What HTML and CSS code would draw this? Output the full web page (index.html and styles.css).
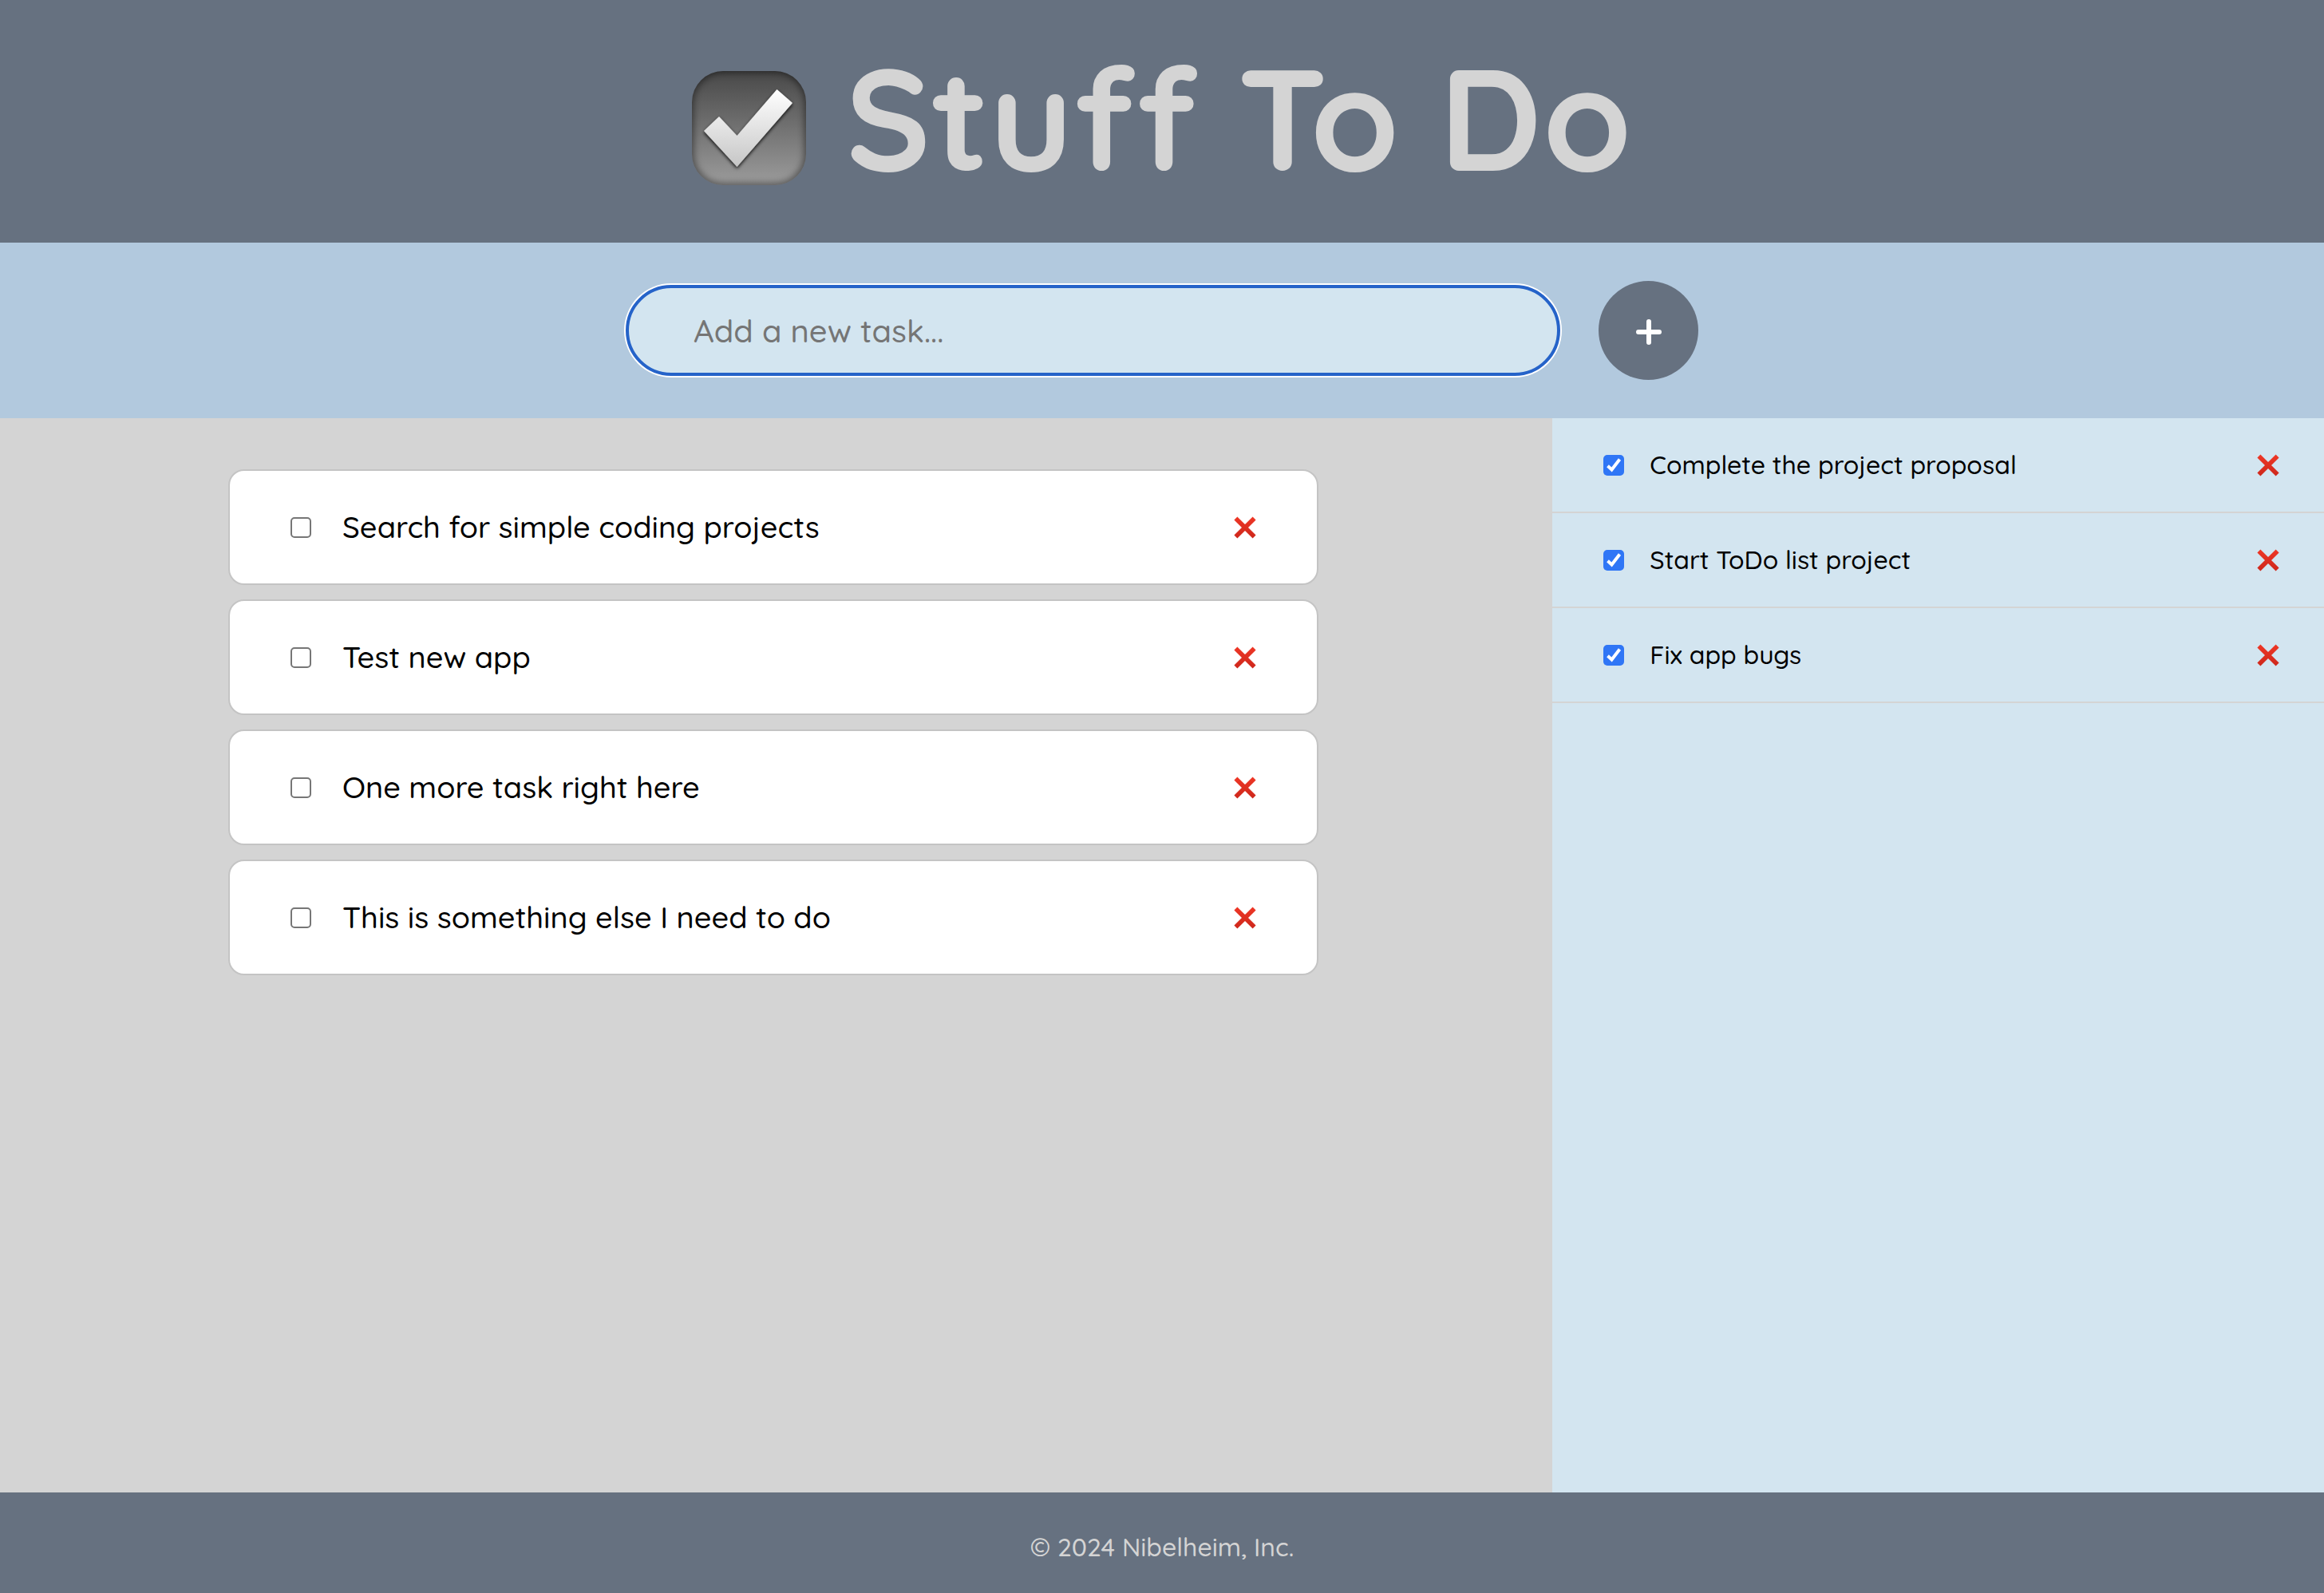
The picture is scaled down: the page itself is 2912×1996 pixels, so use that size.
FILE: index.html
```html
<!DOCTYPE html>
<html lang="en">
<head>
  <meta charset="utf-8">
  <meta name="viewport" content="width=device-width, initial-scale=1">
  <title>Stuff To Do</title>
  <link rel="stylesheet" href="styles.css">
</head>
<body>
  <svg class="defs" width="0" height="0" aria-hidden="true">
    <defs>
      <linearGradient id="red" x1="0" y1="0" x2="0" y2="1">
        <stop offset="0" stop-color="#ef3726"/>
        <stop offset="1" stop-color="#cd271b"/>
      </linearGradient>
      <symbol id="cross" viewBox="0 0 28 28">
        <path fill="url(#red)" d="M4.400.4 14 10 23.600.4 27.600 4.400 18 14 27.600 23.600 23.600 27.600 14 18 4.400 27.600.4 23.600 10 14 .4 4.400z"/>
      </symbol>
    </defs>
  </svg>

  <header class="header">
    <svg class="logo" viewBox="0 0 143 143" aria-hidden="true">
      <defs>
        <linearGradient id="box" x1="0" y1="0" x2="0" y2="1">
          <stop offset="0" stop-color="#484848"/>
          <stop offset="1" stop-color="#9c9c9c"/>
        </linearGradient>
        <linearGradient id="tick" x1="0" y1="0" x2="0" y2="1">
          <stop offset="0" stop-color="#ffffff"/>
          <stop offset="1" stop-color="#c6c6c6"/>
        </linearGradient>
        <clipPath id="shape"><rect width="143" height="143" rx="39"/></clipPath>
        <filter id="soft" x="-20%" y="-20%" width="140%" height="140%"><feGaussianBlur stdDeviation="5"/></filter>
        <filter id="drop" x="-20%" y="-20%" width="140%" height="140%"><feDropShadow dx="0" dy="2" stdDeviation="2" flood-color="#000" flood-opacity=".9"/></filter>
      </defs>
      <g clip-path="url(#shape)">
        <rect width="143" height="143" fill="url(#box)"/>
        <rect x="-3" y="-3" width="149" height="149" rx="42" fill="none" stroke="#000" stroke-opacity=".5" stroke-width="10" filter="url(#soft)"/>
      </g>
      <path d="M15 75 34 57 56.500 81 106.500 23 126 40 56.500 120z" fill="url(#tick)" filter="url(#drop)"/>
    </svg>
    <h1 class="title">Stuff To Do</h1>
  </header>

  <form class="add-bar">
    <input class="add-input" type="text" placeholder="Add a new task..." aria-label="New task">
    <button class="add-button" type="button" aria-label="Add task">
      <svg class="plus" viewBox="0 0 32 32" aria-hidden="true"><path d="M16 3v26M3 16h26" fill="none" stroke="#fff" stroke-width="6" stroke-linecap="round"/></svg>
    </button>
  </form>

  <main class="main">
    <section class="todo" aria-label="Tasks">
      <ul class="cards">
        <li class="card">
          <label class="task"><input class="check" type="checkbox"><span>Search for simple coding projects</span></label>
          <button class="remove" type="button" aria-label="Delete task"><svg class="cross"><use href="#cross"/></svg></button>
        </li>
        <li class="card">
          <label class="task"><input class="check" type="checkbox"><span>Test new app</span></label>
          <button class="remove" type="button" aria-label="Delete task"><svg class="cross"><use href="#cross"/></svg></button>
        </li>
        <li class="card">
          <label class="task"><input class="check" type="checkbox"><span>One more task right here</span></label>
          <button class="remove" type="button" aria-label="Delete task"><svg class="cross"><use href="#cross"/></svg></button>
        </li>
        <li class="card">
          <label class="task"><input class="check" type="checkbox"><span>This is something else I need to do</span></label>
          <button class="remove" type="button" aria-label="Delete task"><svg class="cross"><use href="#cross"/></svg></button>
        </li>
      </ul>
    </section>

    <aside class="done" aria-label="Completed tasks">
      <ul class="rows">
        <li class="row">
          <label class="task task-done"><input class="check" type="checkbox" checked><span>Complete the project proposal</span></label>
          <button class="remove" type="button" aria-label="Delete task"><svg class="cross"><use href="#cross"/></svg></button>
        </li>
        <li class="row">
          <label class="task task-done"><input class="check" type="checkbox" checked><span>Start ToDo list project</span></label>
          <button class="remove" type="button" aria-label="Delete task"><svg class="cross"><use href="#cross"/></svg></button>
        </li>
        <li class="row">
          <label class="task task-done"><input class="check" type="checkbox" checked><span>Fix app bugs</span></label>
          <button class="remove" type="button" aria-label="Delete task"><svg class="cross"><use href="#cross"/></svg></button>
        </li>
      </ul>
    </aside>
  </main>

  <footer class="footer">
    <p class="copyright">© 2024 Nibelheim, Inc.</p>
  </footer>
</body>
</html>
```
FILE: styles.css
```css
* {
  box-sizing: border-box;
}

body {
  display: flex;
  flex-direction: column;
  min-height: 100vh;
  margin: 0;
  background: #d4d4d4;
  color: #000;
  font-family: Quicksand, Lato, sans-serif;
  font-size: 32px;
  font-weight: 500;
}

ul,
h1,
p {
  margin: 0;
  padding: 0;
  list-style: none;
}

.defs {
  position: absolute;
}

.header {
  display: flex;
  align-items: center;
  justify-content: center;
  gap: 49px;
  padding: 35px 40px 45px;
  background: #667180;
}

.logo {
  width: 143px;
  height: 143px;
  margin-top: 27px;
}

.title {
  color: #d4d4d4;
  font-size: 179px;
  font-weight: 700;
  line-height: 224px;
}

.add-bar {
  display: flex;
  align-items: center;
  justify-content: center;
  gap: 48px;
  padding: 48px;
  background: #b2c9de;
}

.add-input {
  width: 1171px;
  max-width: 70%;
  height: 114px;
  padding: 0 81px;
  border: 4px solid #2563c9;
  border-radius: 57px;
  outline: none;
  box-shadow: 0 0 0 2px #fff;
  background: #d3e5f0;
  color: #000;
  font: inherit;
  font-size: 40px;
}

.add-input::placeholder {
  color: #757575;
  opacity: 1;
}

.add-button {
  display: flex;
  align-items: center;
  justify-content: center;
  width: 125px;
  height: 124px;
  padding: 4px 0 0;
  border: 0;
  border-radius: 50%;
  background: #667180;
}

.plus {
  width: 32px;
  height: 32px;
}

.main {
  display: grid;
  flex: 1;
  grid-template-columns: 2fr 1fr;
}

.todo {
  padding: 64px 3px 0 0;
}

.cards {
  display: flex;
  flex-direction: column;
  gap: 18px;
  width: 70.5%;
  margin: 0 auto;
}

.card {
  display: flex;
  align-items: center;
  justify-content: space-between;
  padding: 46px 76px;
  border: 2px solid #c4c4c4;
  border-radius: 20px;
  background: #fff;
}

.task {
  display: flex;
  align-items: center;
  gap: 39px;
  font-size: 38px;
  line-height: 49px;
}

.task-done {
  gap: 32px;
  font-size: 32px;
}

.check {
  appearance: none;
  flex: none;
  width: 26px;
  height: 26px;
  margin: 0;
  border: 2px solid #767676;
  border-radius: 5px;
  background: #fff;
}

.check:checked {
  border: 0;
  background: #2f76f6 url("data:image/svg+xml,%3Csvg xmlns='http://www.w3.org/2000/svg' viewBox='0 0 26 26'%3E%3Cpath d='M5.500 13.800 10.500 18.500 20.500 5.500' fill='none' stroke='white' stroke-width='4'/%3E%3C/svg%3E");
}

.remove {
  display: flex;
  padding: 0;
  border: 0;
  background: none;
}

.cross {
  width: 28px;
  height: 28px;
}

.done {
  border-left: 4px solid #d4d4d4;
  background: #d3e5f0;
}

.row {
  display: flex;
  align-items: center;
  justify-content: space-between;
  padding: 34px 56px 34px 64px;
  border-bottom: 2px solid #d4d4d4;
}

.footer {
  padding: 48px 40px 38px;
  background: #667180;
  color: #d4d4d4;
  text-align: center;
}

.copyright {
  line-height: 40px;
}
```
